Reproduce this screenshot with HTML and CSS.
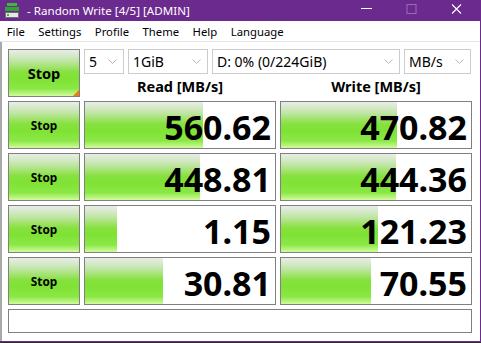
FILE: index.html
```html
<!DOCTYPE html>
<html lang="en">
<head>
    <meta charset="UTF-8">
    <title>Random Write [4/5] [ADMIN]</title>
    <link rel="stylesheet" href="styles.css">
</head>
<body>
    <div class="window">
        <div class="titlebar">
            <svg class="app-icon" width="16" height="16" viewBox="0 0 16 16">
                <rect x="3" y="0" width="10" height="3" fill="#3cb83c"/>
                <rect x="1" y="4" width="14" height="4" fill="#2fa52f"/>
                <rect x="1" y="9" width="14" height="6" fill="#6e6e6e"/>
                <rect x="2" y="10" width="12" height="4" fill="#e8e8e8"/>
                <rect x="3" y="11" width="2" height="2" fill="#3cb83c"/>
            </svg>
            <span class="title">- Random Write [4/5] [ADMIN]</span>
            <div class="controls">
                <svg class="ctl" width="45" height="21" viewBox="0 0 45 21"><line x1="17" y1="8.5" x2="28" y2="8.5" stroke="#fff" stroke-width="1"/></svg>
                <svg class="ctl" width="45" height="21" viewBox="0 0 45 21"><rect x="18" y="4.5" width="9" height="9" fill="none" stroke="#9b6cb6" stroke-width="1"/></svg>
                <svg class="ctl" width="45" height="21" viewBox="0 0 45 21"><path d="M18 4.5 L27 13.5 M27 4.5 L18 13.5" stroke="#fff" stroke-width="1.1"/></svg>
            </div>
        </div>

        <div class="menubar">
            <span>File</span>
            <span>Settings</span>
            <span>Profile</span>
            <span>Theme</span>
            <span>Help</span>
            <span>Language</span>
        </div>

        <div class="client">
            <div class="grid">
                <div class="btn btn-main">Stop<span class="corner"></span></div>
                <div class="toolbar">
                    <div class="combos">
                        <div class="combo w-count">5<svg width="9" height="5" viewBox="0 0 9 5"><polyline points="0.5,0.5 4.5,4.5 8.5,0.5" fill="none" stroke="#b4b4b4"/></svg></div>
                        <div class="combo w-size">1GiB<svg width="9" height="5" viewBox="0 0 9 5"><polyline points="0.5,0.5 4.5,4.5 8.5,0.5" fill="none" stroke="#b4b4b4"/></svg></div>
                        <div class="combo w-drive">D: 0% (0/224GiB)<svg width="9" height="5" viewBox="0 0 9 5"><polyline points="0.5,0.5 4.5,4.5 8.5,0.5" fill="none" stroke="#b4b4b4"/></svg></div>
                        <div class="combo w-unit">MB/s<svg width="9" height="5" viewBox="0 0 9 5"><polyline points="0.5,0.5 4.5,4.5 8.5,0.5" fill="none" stroke="#b4b4b4"/></svg></div>
                    </div>
                    <div class="heads">
                        <div>Read [MB/s]</div>
                        <div>Write [MB/s]</div>
                    </div>
                </div>

                <div class="btn">Stop</div>
                <div class="meter"><div class="fill" style="width:118px"></div><span>560.62</span></div>
                <div class="meter"><div class="fill" style="width:116px"></div><span>470.82</span></div>

                <div class="btn">Stop</div>
                <div class="meter"><div class="fill" style="width:115px"></div><span>448.81</span></div>
                <div class="meter"><div class="fill" style="width:115px"></div><span>444.36</span></div>

                <div class="btn">Stop</div>
                <div class="meter"><div class="fill" style="width:32px"></div><span>1.15</span></div>
                <div class="meter"><div class="fill" style="width:97px"></div><span>121.23</span></div>

                <div class="btn">Stop</div>
                <div class="meter"><div class="fill" style="width:78px"></div><span>30.81</span></div>
                <div class="meter"><div class="fill" style="width:90px"></div><span>70.55</span></div>

                <div class="status"></div>
            </div>
        </div>
    </div>
</body>
</html>
```

FILE: styles.css
```css
body {
    margin: 0;
    padding: 0;
    background-color: #2b2b2b;
    font-family: "Noto Sans", "Open Sans", sans-serif;
}
.window {
    width: 480px;
    height: 341px;
    background-color: #fff;
    border-right: 1px solid #6b2a8d;
    border-bottom: 1px solid #6b2a8d;
    display: flex;
    flex-direction: column;
    overflow: hidden;
}
.titlebar {
    height: 21px;
    background-color: #6b2a8d;
    color: white;
    display: flex;
    align-items: center;
    flex-shrink: 0;
}
.app-icon {
    margin: 0 7px 0 4px;
}
.title {
    font-size: 11.6px;
    flex: 1;
    white-space: nowrap;
}
.controls {
    display: flex;
    margin-right: 1px;
}
.ctl {
    display: block;
}
.menubar {
    height: 20px;
    display: flex;
    align-items: center;
    font-size: 11.3px;
    color: #000;
    border-bottom: 1px solid #e6e6e6;
    flex-shrink: 0;
}
.menubar span {
    padding: 0 6.75px;
}
.client {
    flex: 1;
    border-left: 2px solid #a9a9a9;
    padding: 7px 0 0 6px;
}
.grid {
    display: grid;
    grid-template-columns: 72px 192px 192px;
    grid-template-rows: 48px repeat(4, 48px) 24px;
    gap: 4px;
}
.btn {
    box-sizing: border-box;
    border: 1px solid #808080;
    background: linear-gradient(to bottom, #e9ede9 0%, #c4e6ac 22%, #86e13e 48%, #7fe234 62%, #8ae845 84%, #d2fa9e 100%);
    display: flex;
    align-items: center;
    justify-content: center;
    font-weight: bold;
    font-size: 11.8px;
    color: #000;
}
.btn-main {
    position: relative;
    font-size: 14.6px;
}
.corner {
    position: absolute;
    right: 0;
    bottom: 0;
    width: 0;
    height: 0;
    border-left: 6px solid transparent;
    border-bottom: 6px solid #f0780f;
}
.toolbar {
    grid-column: 2 / 4;
    display: flex;
    flex-direction: column;
}
.combos {
    display: flex;
    gap: 4px;
}
.combo {
    box-sizing: border-box;
    height: 25px;
    border: 1px solid #cccccc;
    background-color: #fff;
    font-size: 14px;
    display: flex;
    align-items: center;
    justify-content: space-between;
    padding: 0 6px 0 4px;
    white-space: nowrap;
}
.w-count { width: 40px; }
.w-size { width: 80px; }
.w-drive { width: 188px; }
.w-unit { width: 67px; }
.heads {
    flex: 1;
    display: grid;
    grid-template-columns: 192px 192px;
    gap: 4px;
    font-weight: bold;
    font-size: 14.5px;
    align-items: center;
    text-align: center;
    padding-top: 1px;
}
.meter {
    position: relative;
    box-sizing: border-box;
    border: 1px solid #808080;
    background-color: #fff;
    display: flex;
    align-items: center;
    justify-content: flex-end;
    padding-right: 4px;
    overflow: hidden;
}
.fill {
    position: absolute;
    left: 0;
    top: 0;
    bottom: 0;
    background: linear-gradient(to bottom, #e9ede9 0%, #c4e6ac 22%, #86e13e 48%, #7fe234 62%, #8ae845 84%, #d2fa9e 100%);
}
.meter span {
    position: relative;
    font-weight: bold;
    font-size: 34px;
    line-height: 1;
    margin-top: 3px;
    color: #000;
}
.status {
    grid-column: 1 / 4;
    box-sizing: border-box;
    border: 1px solid #808080;
    background-color: #fff;
}
```
